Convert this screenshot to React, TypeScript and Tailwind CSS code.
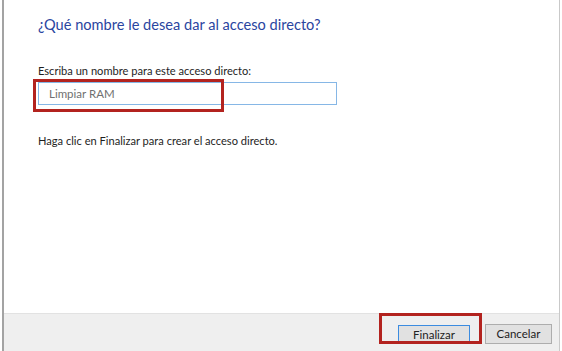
import React from 'react';

// Asistente "Crear acceso directo" - paso final
export default function App() {
  return (
    <div className="w-[562px] h-[351px] bg-white flex overflow-hidden" style={{ fontFamily: 'Lato, "Noto Sans", sans-serif' }}>
      <div className="w-[2px] ml-[2px] bg-[#a3a3a3]" />
      <div className="flex-1 flex flex-col border-r border-[#c9c9c9] mr-[2px]">
        <div className="flex-1 pl-[34px] pt-[15px]">
          <h1 className="text-[14.6px] leading-[20px] text-[#2a45a0]">¿Qué nombre le desea dar al acceso directo?</h1>

          <p className="mt-[29px] text-[11.1px] leading-[14px] text-[#1e1e1e]">Escriba un nombre para este acceso directo:</p>
          <div className="relative mt-[4px] w-[299px]">
            <div className="h-[23px] border border-[#86b7e6] flex items-center pl-[10px] text-[11.5px] text-[#707070]">
              Limpiar RAM
            </div>
            <div className="absolute left-[-5px] top-[-3px] w-[191px] h-[33px] border-[3px] border-[#b3231f]" />
          </div>

          <p className="mt-[29px] text-[11.1px] leading-[14px] text-[#1e1e1e]">Haga clic en Finalizar para crear el acceso directo.</p>
        </div>

        <div className="h-[38px] bg-[#efefef] border-t border-[#e2e2e2] flex items-center justify-end pr-[7px] gap-[15px]">
          <div className="relative">
            <button className="w-[72px] h-[19px] mt-[2px] bg-[#e1e1e1] border border-[#3c8ce0] text-[11.5px] leading-none text-[#222]">Finalizar</button>
            <div className="absolute left-[-19px] top-[-8px] w-[103px] h-[31px] border-[3px] border-[#b3231f]" />
          </div>
          <button className="w-[67px] h-[20px] mt-[2px] bg-[#e1e1e1] border border-[#adadad] text-[11.5px] leading-none text-[#222]">Cancelar</button>
        </div>
      </div>
    </div>
  );
}
